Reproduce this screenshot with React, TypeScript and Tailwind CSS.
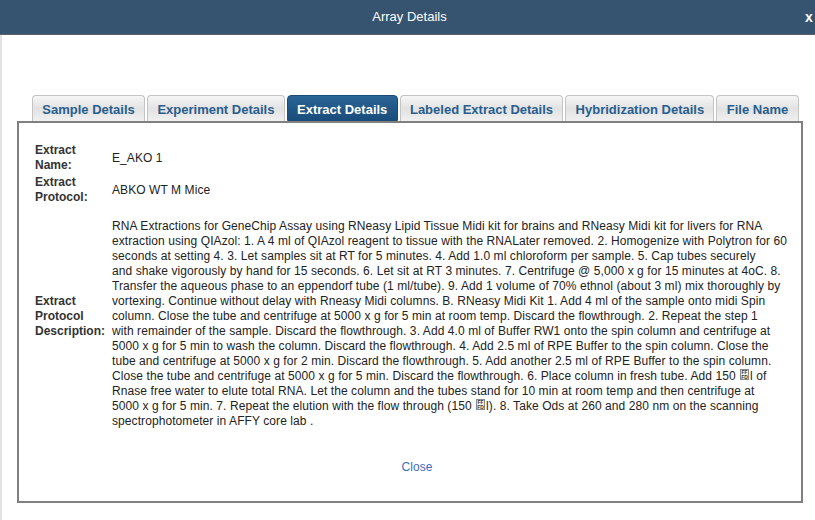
const tabs = [
  'Sample Details',
  'Experiment Details',
  'Extract Details',
  'Labeled Extract Details',
  'Hybridization Details',
  'File Name',
];

// unknown glyph box, as the browser shows it for U+FFFD
function Missing() {
  return (
    <span className="inline-block overflow-hidden w-[9px] h-[11px] border border-[#8a8a8a] bg-[#f4f4f4] text-[5px] leading-[4.5px] font-bold text-[#333] text-center tracking-normal mx-px">
      <span className="block">FF</span>
      <span className="block">FD</span>
    </span>
  );
}

const lines: React.ReactNode[] = [
  'RNA Extractions for GeneChip Assay using RNeasy Lipid Tissue Midi kit for brains and RNeasy Midi kit for livers for RNA',
  'extraction using QIAzol: 1. A 4 ml of QIAzol reagent to tissue with the RNALater removed. 2. Homogenize with Polytron for 60',
  'seconds at setting 4. 3. Let samples sit at RT for 5 minutes. 4. Add 1.0 ml chloroform per sample. 5. Cap tubes securely',
  'and shake vigorously by hand for 15 seconds. 6. Let sit at RT 3 minutes. 7. Centrifuge @ 5,000 x g for 15 minutes at 4oC. 8.',
  'Transfer the aqueous phase to an eppendorf tube (1 ml/tube). 9. Add 1 volume of 70% ethnol (about 3 ml) mix thoroughly by',
  'vortexing. Continue without delay with Rneasy Midi columns. B. RNeasy Midi Kit 1. Add 4 ml of the sample onto midi Spin',
  'column. Close the tube and centrifuge at 5000 x g for 5 min at room temp. Discard the flowthrough. 2. Repeat the step 1',
  'with remainder of the sample. Discard the flowthrough. 3. Add 4.0 ml of Buffer RW1 onto the spin column and centrifuge at',
  '5000 x g for 5 min to wash the column. Discard the flowthrough. 4. Add 2.5 ml of RPE Buffer to the spin column. Close the',
  'tube and centrifuge at 5000 x g for 2 min. Discard the flowthrough. 5. Add another 2.5 ml of RPE Buffer to the spin column.',
  <>
    Close the tube and centrifuge at 5000 x g for 5 min. Discard the flowthrough. 6. Place column in fresh tube. Add 150 <Missing />l of
  </>,
  'Rnase free water to elute total RNA. Let the column and the tubes stand for 10 min at room temp and then centrifuge at',
  <>
    5000 x g for 5 min. 7. Repeat the elution with the flow through (150 <Missing />l). 8. Take Ods at 260 and 280 nm on the scanning
  </>,
  'spectrophotometer in AFFY core lab .',
];

export default function App() {
  const active = 'Extract Details';

  return (
    <div className="w-[815px] h-[520px] overflow-hidden bg-white flex flex-col font-['Liberation_Sans',Arial,sans-serif]">
      <header className="h-[35px] shrink-0 flex items-center bg-[#36536f] border-b border-[#5b5f66] text-white">
        <div className="flex-1 text-center text-[13px] pl-[14px]">Array Details</div>
        <div className="w-[10px] text-[14px] font-bold leading-none">x</div>
      </header>

      <div className="flex-1 border-l-2 border-[#e3e3e3] flex flex-col">
        <div className="mt-[60px] ml-[30px] flex gap-[2px] items-end">
          {tabs.map((t) =>
            t === active ? (
              <div
                key={t}
                className="h-[26px] px-[9.3px] pt-[3px] flex items-center rounded-t-[4px] border border-[#1b4b74] bg-gradient-to-b from-[#2a6596] to-[#1a4d7b] text-white text-[13px] font-bold"
              >
                {t}
              </div>
            ) : (
              <div
                key={t}
                className="h-[26px] px-[9.3px] pt-[3px] flex items-center rounded-t-[4px] border border-b-0 border-[#c4c4c4] bg-gradient-to-b from-[#f6f6f6] via-[#e2e2e2] to-[#f0f0f0] text-[#285e8e] text-[13px] font-bold"
              >
                {t}
              </div>
            )
          )}
        </div>

        <div className="ml-[15px] w-[786px] h-[382px] border-2 border-[#808080] text-[12px] text-[#222] pt-[20px]">
          <div className="grid grid-cols-[77px_685px] pl-[16px] gap-y-[2px] items-center">
            <div className="font-bold leading-[15px] text-[#333]">
              Extract
              <br />
              Name:
            </div>
            <div className="leading-[15px] tracking-[0.08px]">E_AKO 1</div>

            <div className="font-bold leading-[15px] text-[#333]">
              Extract
              <br />
              Protocol:
            </div>
            <div className="leading-[15px] tracking-[0.08px]">ABKO WT M Mice</div>

            <div className="font-bold leading-[15px] text-[#333] mb-[5px]">
              Extract
              <br />
              Protocol
              <br />
              Description:
            </div>
            <div className="leading-[15px] tracking-[0.08px] mt-[12px] mb-[2px] whitespace-nowrap">
              {lines.map((l, i) => (
                <div key={i}>{l}</div>
              ))}
            </div>
          </div>

          <div className="mt-[27px] flex justify-center pl-[14px]">
            <a href="#" className="text-[12px] text-[#3a6cc4] tracking-[0.08px]">
              Close
            </a>
          </div>
        </div>
      </div>
    </div>
  );
}
